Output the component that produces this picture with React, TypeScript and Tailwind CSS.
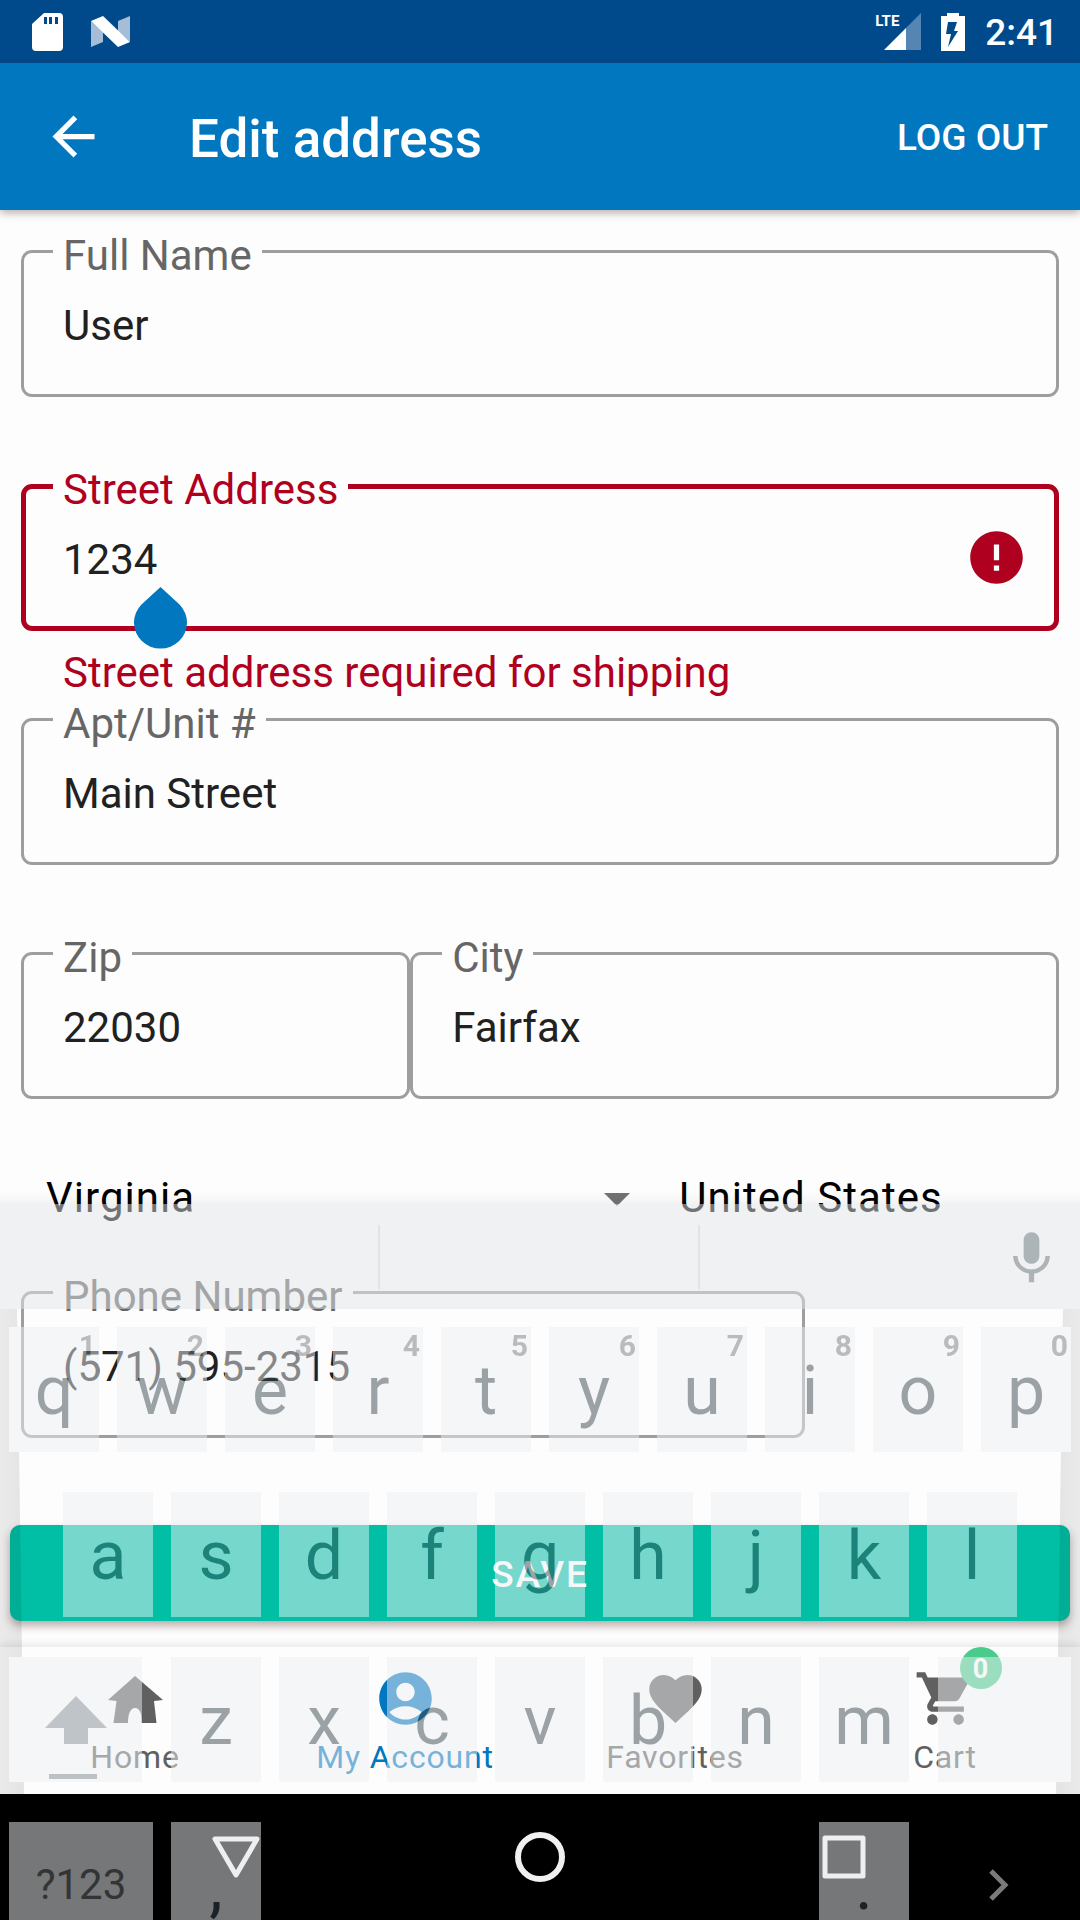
import type { ReactNode } from "react";
import {
  MdAccountCircle,
  MdArrowBack,
  MdError,
  MdFavorite,
  MdMic,
  MdShoppingCart,
} from "react-icons/md";

function StatusBar() {
  return (
    <div className="flex h-[63px] items-center justify-between bg-[#004a8c] pl-8 pr-[22px] text-white">
      <div className="flex items-center gap-7">
        <svg width="31" height="38" viewBox="0 0 31 38" aria-hidden="true">
          <path
            fill="currentColor"
            fillRule="evenodd"
            d="M12 0H27Q31 0 31 4V34Q31 38 27 38H4Q0 38 0 34V11ZM12 4V11H15V4ZM17 4V11H20V4ZM23 4V11H26V4Z"
          />
        </svg>
        <svg width="39" height="31" viewBox="0 0 39 31" aria-hidden="true">
          <path fill="#a5bdd6" d="M0 5L12 16V26L0 31ZM27 5L39 0V26L27 15Z" />
          <path fill="currentColor" d="M0 5L12 0L39 26L27 31Z" />
        </svg>
      </div>
      <div className="flex items-center gap-5">
        <div className="relative">
          <svg width="46" height="37" viewBox="0 0 46 37" aria-hidden="true">
            <path fill="#5585b3" d="M31 15L46 0V37H31Z" />
            <path fill="currentColor" d="M9 37L31 15V37Z" />
          </svg>
          <span className="absolute left-0 top-0 text-[15px] font-bold leading-4">LTE</span>
        </div>
        <svg width="24" height="38" viewBox="0 0 24 38" aria-hidden="true">
          <path
            fill="currentColor"
            fillRule="evenodd"
            d="M6 0H18V3H24V38H0V3H6ZM7 9L5 21H10L7 34L17 18H13L16 9Z"
          />
        </svg>
        <span className="pt-0.5 text-[37px] font-medium leading-[44px]">2:41</span>
      </div>
    </div>
  );
}

function AppBar() {
  return (
    <header className="relative z-10 flex h-[147px] items-center bg-[#0077bf] pl-[42px] pr-8 text-white shadow-[0_3px_8px_rgba(60,30,20,0.35)]">
      <button type="button" aria-label="Back">
        <MdArrowBack size={63} />
      </button>
      <h1 className="ml-[84px] flex-1 pt-1 text-[53px] font-medium leading-[60px]">Edit address</h1>
      <button type="button" className="pt-0.5 text-[37px] font-medium leading-[44px]">
        LOG OUT
      </button>
    </header>
  );
}

type FieldProps = {
  id: string;
  label: string;
  value: string;
  error?: string;
  className?: string;
  children?: ReactNode;
};

function Field({ id, label, value, error, className = "", children }: FieldProps) {
  return (
    <div className={className}>
      <div className="relative">
        <input
          id={id}
          defaultValue={value}
          aria-invalid={error ? true : undefined}
          aria-describedby={error ? `${id}-error` : undefined}
          className={
            error
              ? "block h-[147px] w-full rounded-[11px] border-[5px] border-[#b00020] bg-transparent px-[37px] pt-1 text-[42px] text-[#212121] outline-none"
              : "block h-[147px] w-full rounded-[11px] border-[3px] border-[#9e9e9e] bg-transparent px-[39px] pt-1 text-[42px] text-[#212121] outline-none"
          }
        />
        <label
          htmlFor={id}
          className={
            error
              ? "absolute -top-[18px] left-8 bg-[#fdfdfd] px-[10px] text-[42px] leading-[48px] text-[#b00020]"
              : "absolute -top-[18px] left-8 bg-[#fdfdfd] px-[10px] text-[42px] leading-[48px] text-[#666666]"
          }
        >
          {label}
        </label>
        {children}
      </div>
      {error && (
        <p id={`${id}-error`} className="-mb-[66px] pl-[42px] pt-[18px] text-[42px] leading-[48px] text-[#b00020]">
          {error}
        </p>
      )}
    </div>
  );
}

function AddressForm() {
  return (
    <form className="flex flex-col pt-10">
      <div className="flex flex-col gap-[87px] px-[21px]">
        <Field id="name" label="Full Name" value="User" />
        <Field id="street" label="Street Address" value="1234" error="Street address required for shipping">
          <MdError size={63} className="absolute right-[31px] top-[42px] text-[#b00020]" />
          <svg
            width="53"
            height="62"
            viewBox="0 0 53 62"
            className="absolute left-[113px] top-[103px] text-[#0077bf]"
            aria-hidden="true"
          >
            <path fill="currentColor" d="M26.5 0L45.5 17.5A26.5 26 0 1 1 7.5 17.5Z" />
          </svg>
        </Field>
        <Field id="apt" label="Apt/Unit #" value="Main Street" />
        <div className="flex">
          <Field id="zip" label="Zip" value="22030" className="flex-[3]" />
          <Field id="city" label="City" value="Fairfax" className="flex-[5]" />
        </div>
      </div>
      <div className="flex h-48 items-center px-[21px] text-[42px] text-black">
        <div className="relative w-[61%]">
          <select
            aria-label="State"
            className="block h-16 w-full appearance-none bg-transparent pl-[25px] pt-[3px] tracking-wide outline-none"
          >
            <option>Virginia</option>
          </select>
          <svg
            width="26"
            height="13"
            viewBox="0 0 26 13"
            className="pointer-events-none absolute right-6 top-[30px] text-[#737373]"
            aria-hidden="true"
          >
            <path fill="currentColor" d="M0 0H26L13 13Z" />
          </svg>
        </div>
        <select
          aria-label="Country"
          className="block h-16 flex-1 appearance-none bg-transparent pl-[25px] pt-[3px] tracking-wide outline-none"
        >
          <option>United States</option>
        </select>
      </div>
      <Field id="phone" label="Phone Number" value="(571) 595-2315" className="ml-[21px] mr-[275px]" />
      <button
        type="submit"
        className="mx-[10px] mt-[87px] h-24 rounded-[10px] bg-[#00bfa5] pt-1 text-[37px] font-medium tracking-wider text-white shadow-[0_5px_8px_rgba(60,30,20,0.35)]"
      >
        SAVE
      </button>
    </form>
  );
}

function HomeIcon() {
  return (
    <svg width="63" height="63" viewBox="0 0 63 63" aria-hidden="true">
      <path
        fill="currentColor"
        d="M31 9L59 33L50 34L52.5 56H37.5C38 48 36.500 41 31 41C26 41 24 48 24 56H9.500L12.500 34L4 33Z"
      />
    </svg>
  );
}

function TabLink({ label, active, badge, children }: { label: string; active?: boolean; badge?: string; children: ReactNode }) {
  return (
    <a
      href="#"
      aria-current={active ? "page" : undefined}
      className={
        active
          ? "flex flex-1 flex-col items-center gap-[9px] pt-5 text-[#0077bf]"
          : "flex flex-1 flex-col items-center gap-[9px] pt-5 text-[#606060]"
      }
    >
      <span className="relative">
        {children}
        {badge && (
          <span className="absolute -top-5 left-[46px] flex size-[42px] items-center justify-center rounded-full bg-[#4acb8b] pt-0.5 text-[27px] font-bold text-white">
            {badge}
          </span>
        )}
      </span>
      <span className="text-[32px] leading-9 tracking-wide">{label}</span>
    </a>
  );
}

function TabBar() {
  return (
    <nav className="relative flex h-[147px] bg-[#fdfdfd] shadow-[0_-2px_8px_rgba(0,0,0,0.1)]">
      <TabLink label="Home">
        <HomeIcon />
      </TabLink>
      <TabLink label="My Account" active>
        <MdAccountCircle size={63} />
      </TabLink>
      <TabLink label="Favorites">
        <MdFavorite size={63} />
      </TabLink>
      <TabLink label="Cart" badge="0">
        <MdShoppingCart size={63} />
      </TabLink>
    </nav>
  );
}

function SystemBar() {
  return (
    <div className="relative flex h-[126px] items-center bg-black px-[84px] text-[#f0f0f0]">
      <button type="button" aria-label="System back" className="flex flex-1 justify-center">
        <svg width="48" height="44" viewBox="0 0 48 44" fill="none" stroke="currentColor" strokeWidth="5" strokeLinejoin="round" aria-hidden="true">
          <path d="M3 4H45L24 40Z" />
        </svg>
      </button>
      <button type="button" aria-label="System home" className="flex flex-1 justify-center">
        <svg width="50" height="50" viewBox="0 0 50 50" fill="none" stroke="currentColor" strokeWidth="6" aria-hidden="true">
          <circle cx="25" cy="25" r="22" />
        </svg>
      </button>
      <button type="button" aria-label="Recent apps" className="flex flex-1 justify-center">
        <svg width="44" height="44" viewBox="0 0 44 44" fill="none" stroke="currentColor" strokeWidth="5" strokeLinejoin="round" aria-hidden="true">
          <path d="M3 3H41V41H3Z" />
        </svg>
      </button>
    </div>
  );
}

function LetterKey({ letter, hint }: { letter: string; hint?: string }) {
  return (
    <button
      type="button"
      className="relative flex h-[125px] flex-1 items-center justify-center bg-[#edeff3] pt-[3px] text-[68px] leading-[68px] text-[#37474f]"
    >
      {letter}
      {hint && (
        <span className="absolute right-[3px] top-1 text-[30px] font-bold leading-[30px] text-[#75797c]">{hint}</span>
      )}
    </button>
  );
}

function Keyboard() {
  return (
    <div className="pointer-events-none absolute inset-x-0 bottom-0 z-20 opacity-50">
      <div className="h-3 bg-linear-to-b from-transparent to-black/8" />
      <div className="flex h-[105px] items-center bg-[#e1e4e9] pr-[17px]">
        <div className="flex h-16 flex-1">
          <div className="w-[380px] border-r-2 border-[#c5c8cb]" />
          <div className="w-[320px] border-r-2 border-[#c5c8cb]" />
        </div>
        <button type="button" aria-label="Voice input" className="pt-[3px] text-[#5b6b72]">
          <MdMic size={63} />
        </button>
      </div>
      <div className="relative">
        <div className="absolute left-0 top-0 h-[485px] w-6 bg-linear-to-r from-black/15 to-black/20 [clip-path:polygon(0_0,17px_0,100%_100%,0_100%)]" />
        <div className="absolute right-0 top-0 h-[485px] w-6 bg-linear-to-l from-black/15 to-black/20 [clip-path:polygon(100%_0,7px_0,0_100%,100%_100%)]" />
        <div className="relative flex flex-col gap-10 pt-[18px]">
          <div className="flex gap-[18px] px-[9px]">
            {[..."qwertyuiop"].map((letter, i) => (
              <LetterKey key={letter} letter={letter} hint={String((i + 1) % 10)} />
            ))}
          </div>
          <div className="flex gap-[18px] px-[63px]">
            {[..."asdfghjkl"].map((letter) => (
              <LetterKey key={letter} letter={letter} />
            ))}
          </div>
          <div className="flex gap-[18px] px-[9px]">
            <button
              type="button"
              aria-label="Shift"
              className="mr-[11px] flex h-[125px] w-[133px] items-end justify-center bg-[#edeff3] pb-[3px]"
            >
              <svg width="62" height="83" viewBox="0 0 62 83" aria-hidden="true">
                <path fill="#7f8b90" d="M31 0L62 32H43V48H19V32H0Z" />
                <path fill="#7f8588" d="M4 78H52V83H4Z" />
              </svg>
            </button>
            {[..."zxcvbnm"].map((letter) => (
              <LetterKey key={letter} letter={letter} />
            ))}
            <button type="button" aria-label="Delete" className="ml-[11px] h-[125px] w-[133px] bg-[#edeff3]" />
          </div>
          <div className="flex h-[98px] gap-[18px] overflow-hidden px-[9px]">
            <button type="button" className="h-[125px] w-36 bg-[#edeff3] text-[42px] text-[#66696c]">
              ?123
            </button>
            <div className="flex w-[90px]">
              <LetterKey letter="," />
            </div>
            <div className="flex-1" />
            <div className="flex w-[90px]">
              <LetterKey letter="." />
            </div>
            <button type="button" aria-label="Next" className="flex h-[125px] w-36 items-center justify-center text-[#f5f5f5]">
              <svg width="20" height="32" viewBox="0 0 20 32" fill="none" stroke="currentColor" strokeWidth="5" aria-hidden="true">
                <path d="M2 2L16 16L2 30" />
              </svg>
            </button>
          </div>
        </div>
      </div>
    </div>
  );
}

export default function App() {
  return (
    <div className="relative flex min-h-screen flex-col overflow-hidden bg-[#fdfdfd] font-[Roboto,sans-serif]">
      <StatusBar />
      <AppBar />
      <main className="flex-1 pb-[26px]">
        <AddressForm />
      </main>
      <TabBar />
      <SystemBar />
      <Keyboard />
    </div>
  );
}
